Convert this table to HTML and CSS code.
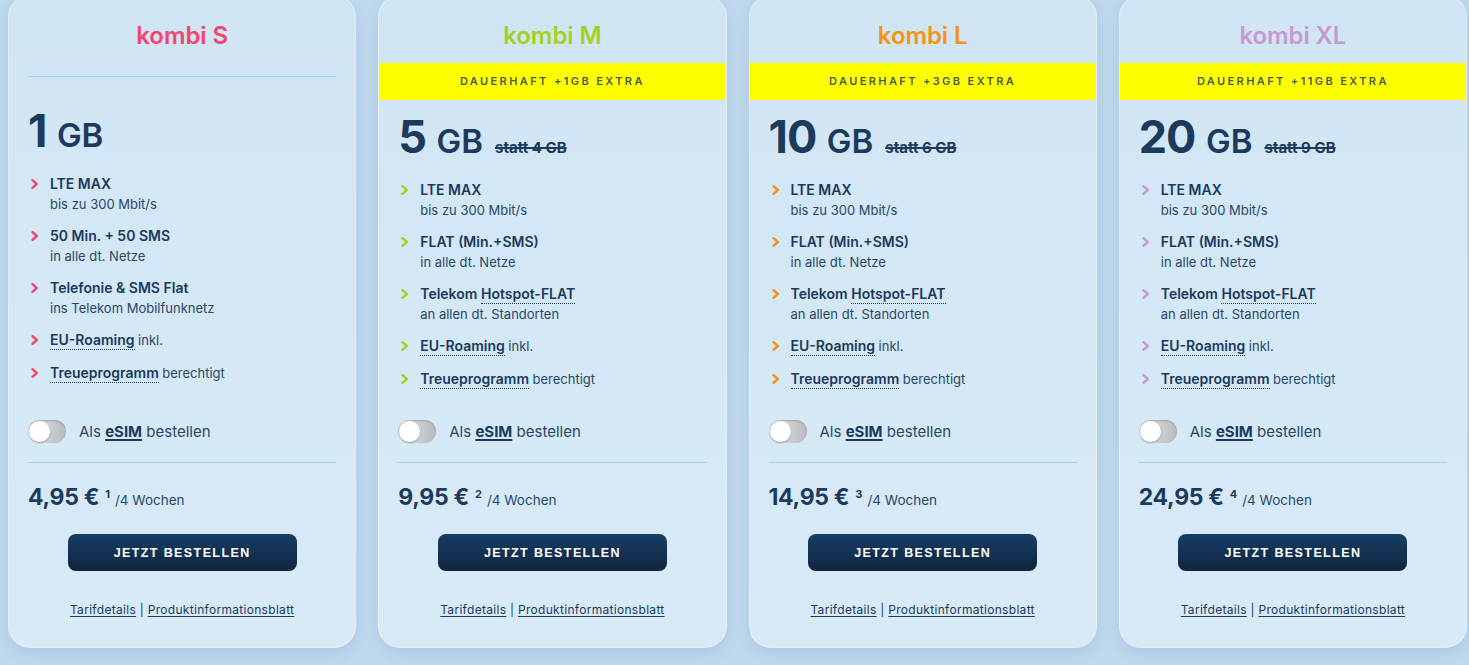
FILE: index.html
```html
<!DOCTYPE html>
<html lang="de">
<head>
<meta charset="utf-8">
<title>kombi Tarife</title>
<link rel="stylesheet" href="styles.css">
</head>
<body>
<svg width="0" height="0" class="defs">
  <defs>
    <symbol id="chev" viewBox="0 0 8 10"><polyline points="1.5,1.2 5.8,5 1.5,8.8" fill="none" stroke="currentColor" stroke-width="2.4" stroke-linecap="round" stroke-linejoin="round"/></symbol>
  </defs>
</svg>
<main class="tariffs">
  <!-- kombi S -->
  <section class="card c-s">
    <h2 class="title">kombi S</h2>
    <hr class="divider top-div">
    <div class="volume v-s"><span class="num">1</span> <span class="unit">GB</span></div>
    <ul class="features">
      <li><svg class="chev"><use href="#chev"/></svg><div class="ft">LTE MAX</div><div class="fs">bis zu 300 Mbit/s</div></li>
      <li><svg class="chev"><use href="#chev"/></svg><div class="ft">50 Min. + 50 SMS</div><div class="fs">in alle dt. Netze</div></li>
      <li><svg class="chev"><use href="#chev"/></svg><div class="ft">Telefonie &amp; SMS Flat</div><div class="fs">ins Telekom Mobilfunknetz</div></li>
      <li><svg class="chev"><use href="#chev"/></svg><div class="ft"><span class="dot">EU-Roaming</span> <span class="light">inkl.</span></div></li>
      <li><svg class="chev"><use href="#chev"/></svg><div class="ft"><span class="dot">Treueprogramm</span> <span class="light">berechtigt</span></div></li>
    </ul>
    <div class="bottom">
      <label class="esim"><span class="toggle"><span class="knob"></span></span><span>Als <b class="ul">eSIM</b> bestellen</span></label>
      <hr class="divider">
      <div class="price"><span class="amount">4,95 €</span><sup>1</sup><span class="per">/4 Wochen</span></div>
      <button class="btn">JETZT BESTELLEN</button>
      <div class="links"><a href="#">Tarifdetails</a> | <a href="#">Produktinformationsblatt</a></div>
    </div>
  </section>

  <!-- kombi M -->
  <section class="card c-m">
    <h2 class="title">kombi M</h2>
    <div class="band">DAUERHAFT +1GB EXTRA</div>
    <div class="volume"><span class="num">5</span> <span class="unit">GB</span><s class="statt">statt 4 GB</s></div>
    <ul class="features">
      <li><svg class="chev"><use href="#chev"/></svg><div class="ft">LTE MAX</div><div class="fs">bis zu 300 Mbit/s</div></li>
      <li><svg class="chev"><use href="#chev"/></svg><div class="ft">FLAT (Min.+SMS)</div><div class="fs">in alle dt. Netze</div></li>
      <li><svg class="chev"><use href="#chev"/></svg><div class="ft">Telekom <span class="dot">Hotspot-FLAT</span></div><div class="fs">an allen dt. Standorten</div></li>
      <li><svg class="chev"><use href="#chev"/></svg><div class="ft"><span class="dot">EU-Roaming</span> <span class="light">inkl.</span></div></li>
      <li><svg class="chev"><use href="#chev"/></svg><div class="ft"><span class="dot">Treueprogramm</span> <span class="light">berechtigt</span></div></li>
    </ul>
    <div class="bottom">
      <label class="esim"><span class="toggle"><span class="knob"></span></span><span>Als <b class="ul">eSIM</b> bestellen</span></label>
      <hr class="divider">
      <div class="price"><span class="amount">9,95 €</span><sup>2</sup><span class="per">/4 Wochen</span></div>
      <button class="btn">JETZT BESTELLEN</button>
      <div class="links"><a href="#">Tarifdetails</a> | <a href="#">Produktinformationsblatt</a></div>
    </div>
  </section>

  <!-- kombi L -->
  <section class="card c-l">
    <h2 class="title">kombi L</h2>
    <div class="band">DAUERHAFT +3GB EXTRA</div>
    <div class="volume"><span class="num">10</span> <span class="unit">GB</span><s class="statt">statt 6 GB</s></div>
    <ul class="features">
      <li><svg class="chev"><use href="#chev"/></svg><div class="ft">LTE MAX</div><div class="fs">bis zu 300 Mbit/s</div></li>
      <li><svg class="chev"><use href="#chev"/></svg><div class="ft">FLAT (Min.+SMS)</div><div class="fs">in alle dt. Netze</div></li>
      <li><svg class="chev"><use href="#chev"/></svg><div class="ft">Telekom <span class="dot">Hotspot-FLAT</span></div><div class="fs">an allen dt. Standorten</div></li>
      <li><svg class="chev"><use href="#chev"/></svg><div class="ft"><span class="dot">EU-Roaming</span> <span class="light">inkl.</span></div></li>
      <li><svg class="chev"><use href="#chev"/></svg><div class="ft"><span class="dot">Treueprogramm</span> <span class="light">berechtigt</span></div></li>
    </ul>
    <div class="bottom">
      <label class="esim"><span class="toggle"><span class="knob"></span></span><span>Als <b class="ul">eSIM</b> bestellen</span></label>
      <hr class="divider">
      <div class="price"><span class="amount">14,95 €</span><sup>3</sup><span class="per">/4 Wochen</span></div>
      <button class="btn">JETZT BESTELLEN</button>
      <div class="links"><a href="#">Tarifdetails</a> | <a href="#">Produktinformationsblatt</a></div>
    </div>
  </section>

  <!-- kombi XL -->
  <section class="card c-xl">
    <h2 class="title">kombi XL</h2>
    <div class="band">DAUERHAFT +11GB EXTRA</div>
    <div class="volume"><span class="num">20</span> <span class="unit">GB</span><s class="statt">statt 9 GB</s></div>
    <ul class="features">
      <li><svg class="chev"><use href="#chev"/></svg><div class="ft">LTE MAX</div><div class="fs">bis zu 300 Mbit/s</div></li>
      <li><svg class="chev"><use href="#chev"/></svg><div class="ft">FLAT (Min.+SMS)</div><div class="fs">in alle dt. Netze</div></li>
      <li><svg class="chev"><use href="#chev"/></svg><div class="ft">Telekom <span class="dot">Hotspot-FLAT</span></div><div class="fs">an allen dt. Standorten</div></li>
      <li><svg class="chev"><use href="#chev"/></svg><div class="ft"><span class="dot">EU-Roaming</span> <span class="light">inkl.</span></div></li>
      <li><svg class="chev"><use href="#chev"/></svg><div class="ft"><span class="dot">Treueprogramm</span> <span class="light">berechtigt</span></div></li>
    </ul>
    <div class="bottom">
      <label class="esim"><span class="toggle"><span class="knob"></span></span><span>Als <b class="ul">eSIM</b> bestellen</span></label>
      <hr class="divider">
      <div class="price"><span class="amount">24,95 €</span><sup>4</sup><span class="per">/4 Wochen</span></div>
      <button class="btn">JETZT BESTELLEN</button>
      <div class="links"><a href="#">Tarifdetails</a> | <a href="#">Produktinformationsblatt</a></div>
    </div>
  </section>
</main>
</body>
</html>
```

FILE: styles.css
```css
* { box-sizing: border-box; }
html, body {
  margin: 0;
  padding: 0;
  height: 665px;
  overflow: hidden;
  background: #bfd8ed;
  font-family: Inter, "Open Sans", "Liberation Sans", sans-serif;
  color: #1b3a5c;
}
.defs { position: absolute; }

.tariffs {
  display: flex;
  gap: 22px;
  padding: 0 2px 0 8px;
  margin-top: -5px;
}

.card {
  flex: 1 1 0;
  min-width: 0;
  height: 653px;
  display: flex;
  flex-direction: column;
  background: linear-gradient(180deg, #d0e5f4 0%, #d5e8f6 60%, #d9eaf7 100%);
  border: 1px solid rgba(255,255,255,0.35);
  border-radius: 22px;
  box-shadow: 0 6px 14px rgba(40, 100, 160, 0.12);
  overflow: hidden;
}

.title {
  margin: 0;
  padding-top: 24px;
  height: 56px;
  line-height: 32px;
  font-size: 24px;
  font-weight: 600;
  text-align: center;
  letter-spacing: -0.1px;
}
.c-s .title { color: #f4456f; }
.c-m .title { color: #a3d11c; }
.c-l .title { color: #f39412; }
.c-xl .title { color: #c59bcf; }

.c-s { --acc: #f4456f; }
.c-m { --acc: #a3d11c; }
.c-l { --acc: #f39412; }
.c-xl { --acc: #c59bcf; }

.divider {
  margin: 0 19px;
  border: 0;
  height: 1px;
  background: #a9d2f1;
}
.top-div { margin-top: 24px; }

.band {
  margin-top: 11px;
  height: 37px;
  line-height: 37px;
  background: #ffff00;
  color: #4e5c52;
  text-align: center;
  font-size: 11px;
  font-weight: 600;
  letter-spacing: 2.4px;
}

.volume {
  margin: 9px 19px 0;
  height: 56px;
  line-height: 56px;
  white-space: nowrap;
}
.volume.v-s { margin-top: 26px; }
.num {
  font-size: 45px;
  font-weight: 700;
  letter-spacing: -1px;
}
.unit {
  font-size: 33px;
  font-weight: 600;
  margin-left: 6px;
}
.statt {
  margin-left: 12px;
  font-size: 15px;
  font-weight: 700;
  text-decoration-thickness: 1.5px;
}

.features {
  list-style: none;
  margin: 14px 19px 0;
  padding: 0;
  display: flex;
  flex-direction: column;
  gap: 11px;
}
.features li {
  position: relative;
  padding-left: 22px;
}
.chev {
  position: absolute;
  left: 3px;
  top: 6px;
  width: 8px;
  height: 10px;
  color: var(--acc);
}
.ft {
  font-size: 14px;
  font-weight: 600;
  line-height: 22px;
  height: 22px;
  white-space: nowrap;
}
.fs {
  font-size: 13px;
  line-height: 19px;
  font-weight: 400;
  color: #2a4866;
}
.light {
  font-size: 13px;
  line-height: 1;
  font-weight: 400;
  color: #2a4866;
}
.dot {
  border-bottom: 1.5px dotted #1b3a5c;
  padding-bottom: 1px;
}

.bottom {
  margin-top: auto;
  padding-bottom: 29px;
  display: flex;
  flex-direction: column;
}

.esim {
  display: flex;
  align-items: center;
  gap: 13px;
  margin: 0 19px;
  height: 23px;
  font-size: 15px;
  color: #2a4866;
}
.esim b { font-weight: 700; color: #1b3a5c; }
.ul { text-decoration: underline; text-underline-offset: 2px; text-decoration-thickness: 1.5px; }
.toggle {
  width: 38px;
  height: 23px;
  border-radius: 12px;
  background: linear-gradient(90deg, #e4e6e8 0%, #b9bcbf 100%);
  box-shadow: inset 0 1px 2px rgba(0,0,0,0.2);
  display: flex;
  align-items: center;
  padding-left: 1px;
}
.knob {
  width: 21px;
  height: 21px;
  border-radius: 50%;
  background: #fff;
  box-shadow: 0 1px 2px rgba(0,0,0,0.25);
}

.bottom .divider { margin-top: 19px; }

.price {
  margin: 20px 19px 0;
  height: 30px;
  display: flex;
  align-items: baseline;
  white-space: nowrap;
}
.amount {
  font-size: 23px;
  font-weight: 700;
  letter-spacing: -0.3px;
}
.price sup {
  font-size: 11px;
  font-weight: 700;
  margin-left: 6px;
  position: relative;
  top: -7px;
  vertical-align: baseline;
}
.per {
  margin-left: 5px;
  font-size: 13.5px;
  color: #2a4866;
}

.btn {
  align-self: center;
  margin-top: 21px;
  width: 229px;
  height: 37px;
  border: 0;
  border-radius: 8px;
  background: linear-gradient(180deg, #173d63 0%, #102540 100%);
  color: #fff;
  font-family: "Liberation Sans", Arial, sans-serif;
  font-weight: 700;
  font-size: 12.5px;
  letter-spacing: 1.4px;
  cursor: pointer;
}

.links {
  margin-top: 31px;
  text-align: center;
  font-size: 12px;
  letter-spacing: 0.3px;
  line-height: 16px;
  color: #1b3a5c;
}
.links a {
  color: #1b3a5c;
  text-decoration: underline;
  text-underline-offset: 2px;
}
```
